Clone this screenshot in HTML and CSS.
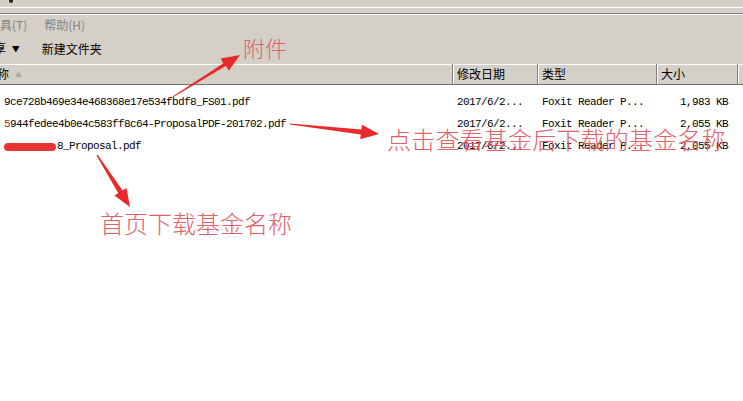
FILE: index.html
```html
<!DOCTYPE html>
<html lang="zh-CN">
<head>
<meta charset="utf-8">
<title>文件列表</title>
<link rel="stylesheet" href="styles.css">
</head>
<body>
<div class="page">
  <div class="chrome">
    <div class="topband"><span class="topicon"></span></div>
    <div class="edge"></div>
    <nav class="menubar">
      <span class="menu menu-tools">具(T)</span>
      <span class="menu">帮助(H)</span>
    </nav>
    <div class="toolbar">
      <span class="tool tool-share">享 <span class="caret">▼</span></span>
      <span class="tool">新建文件夹</span>
    </div>
  </div>

  <div class="header">
    <div class="hcell hname"><span class="hname-text">称</span><span class="sort">▲</span></div>
    <div class="hcell">修改日期</div>
    <div class="hcell">类型</div>
    <div class="hcell">大小</div>
    <div class="hcell"></div>
  </div>

  <div class="list">
    <div class="row">
      <span class="cell name">9ce728b469e34e468368e17e534fbdf8_FS01.pdf</span>
      <span class="cell">2017/6/2...</span>
      <span class="cell">Foxit Reader P...</span>
      <span class="cell size">1,983 KB</span>
    </div>
    <div class="row">
      <span class="cell name"><span class="tint">5</span>944fedee4b0e4c583ff8c64-ProposalPDF-201702.pdf</span>
      <span class="cell">2017/6/2...</span>
      <span class="cell">Foxit Reader P...</span>
      <span class="cell size">2,055 KB</span>
    </div>
    <div class="row">
      <span class="cell name"><span class="redact"></span>8_Proposal.pdf</span>
      <span class="cell">2017/6/2...</span>
      <span class="cell">Foxit Reader P...</span>
      <span class="cell size">2,055 KB</span>
    </div>
  </div>

  <svg class="arrows" width="743" height="401" viewBox="0 0 743 401" aria-hidden="true">
    <polygon points="172.6,97.6 225.8,65.9 228.8,70.8 240,55 220.6,58.4 223.4,63.3 172.2,96.8"/>
    <polygon points="289.9,124.6 360.8,134.6 360.2,139.2 379,134 362.0,124.8 361.4,129.4 290.1,123.4"/>
    <polygon points="96.5,155.4 118.3,193.2 114.3,195.6 130,207 126.5,188.0 122.5,190.4 97.5,154.6"/>
  </svg>

  <div class="note note-attach">附件</div>
  <div class="note note-view">点击查看基金后下载的基金名称</div>
  <div class="note note-home">首页下载基金名称</div>
</div>
</body>
</html>
```

FILE: styles.css
```css
html, body {
  margin: 0;
  padding: 0;
  background: #ffffff;
}

.page {
  position: relative;
  width: 743px;
  height: 401px;
  overflow: hidden;
  font-family: "Noto Sans CJK SC", "Noto Sans", sans-serif;
  font-size: 12px;
  color: #000;
}

.chrome {
  background: #d4d0c8;
  display: flex;
  flex-direction: column;
}

.topband {
  height: 7px;
}

.topicon {
  display: block;
  width: 4px;
  height: 3px;
  margin-left: 9px;
  background: #222;
  border-radius: 0 0 2px 2px;
}

.edge {
  height: 5px;
  border-top: 1px solid #ffffff;
  border-bottom: 1px solid #808080;
  box-shadow: 0 1px 0 #ffffff;
}

.menubar {
  height: 19px;
  margin-top: 1px;
  display: flex;
  align-items: center;
  gap: 17px;
}

.menu {
  color: #858585;
  line-height: 16px;
}

.menu-tools {
  margin-left: 0;
}

.toolbar {
  height: 29px;
  display: flex;
  align-items: center;
  gap: 22px;
}

.tool {
  line-height: 16px;
}

.tool-share {
  margin-left: 0;
  clip-path: inset(0 0 0 6px);
  margin-left: -6px;
}

.caret {
  font-size: 8px;
  margin-left: 3px;
  vertical-align: 1px;
}

.header {
  display: grid;
  grid-template-columns: 452px 85px 119px 81px 6px;
  height: 20px;
  background: #d4d0c8;
  border-top: 1px solid #d4d0c8;
  box-shadow: inset 0 1px 0 #ffffff;
  border-bottom: 1px solid #707070;
}

.hcell {
  display: flex;
  align-items: center;
  padding-left: 4px;
  line-height: 16px;
  border-left: 1px solid #808080;
  box-shadow: inset 1px 0 0 #ffffff, inset 0 1px 0 #ffffff;
}

.hname {
  border-left: none;
  padding-left: 0;
  box-shadow: inset 0 1px 0 #ffffff;
}

.hname-text {
  margin-left: -3px;
}

.sort {
  color: #a8a8a8;
  font-size: 7px;
  margin-left: 6px;
}

.list {
  padding-top: 6px;
  font-family: "Liberation Mono", "DejaVu Sans Mono", monospace;
  font-size: 11px;
  letter-spacing: -0.6px;
}

.row {
  display: grid;
  grid-template-columns: 452px 85px 119px 81px;
  height: 22px;
  align-items: center;
}

.cell {
  padding-left: 5px;
  white-space: nowrap;
}

.cell.name {
  padding-left: 4px;
  display: flex;
  align-items: center;
}

.cell.size {
  text-align: right;
  padding-right: 9px;
}

.tint {
  color: #a02828;
}

.redact {
  display: inline-block;
  width: 52px;
  height: 8px;
  margin-right: 1px;
  margin-top: 2px;
  background: #e63434;
  border-radius: 4px;
}

.arrows {
  position: absolute;
  left: 0;
  top: 0;
  pointer-events: none;
}

.arrows polygon {
  fill: #ea2a2a;
}

.note {
  position: absolute;
  color: #e06268;
  line-height: 1;
  white-space: nowrap;
  font-family: "Noto Sans CJK SC", sans-serif;
  font-weight: 300;
}

.note-attach {
  left: 243px;
  top: 36px;
  font-size: 22px;
}

.note-view {
  left: 387px;
  top: 127px;
  font-size: 24px;
  letter-spacing: 0.2px;
}

.note-home {
  left: 100px;
  top: 211px;
  font-size: 24px;
}
```
